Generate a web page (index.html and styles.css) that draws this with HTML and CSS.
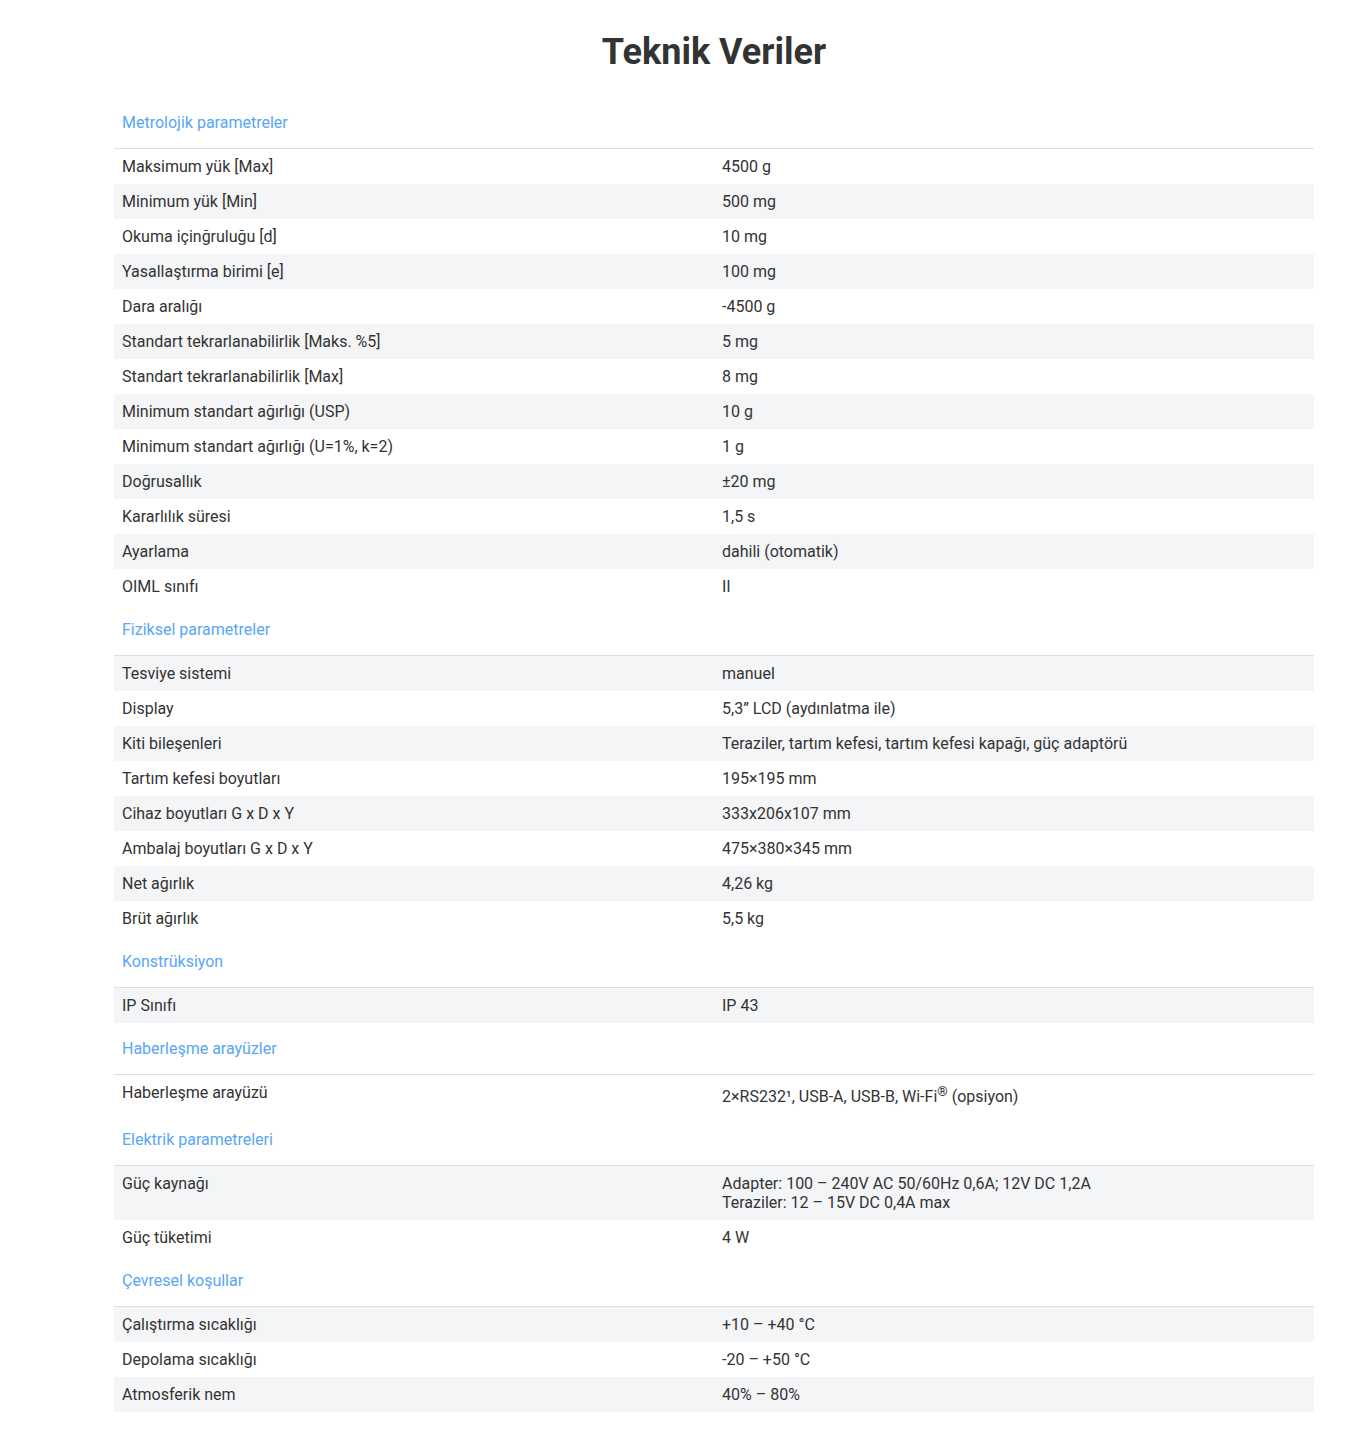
FILE: index.html
```html
<!DOCTYPE html>
<html lang="tr">
<head>
<meta charset="utf-8">
<title>Teknik Veriler</title>
<link rel="stylesheet" href="styles.css">
</head>
<body>
<div class="page">
  <h1 class="title">Teknik Veriler</h1>
  <table class="spec">
    <colgroup><col class="c1"><col class="c2"></colgroup>
    <tbody>
      <tr class="sec"><th colspan="2">Metrolojik parametreler</th></tr>
      <tr><td>Maksimum yük [Max]</td><td>4500 g</td></tr>
      <tr class="g"><td>Minimum yük [Min]</td><td>500 mg</td></tr>
      <tr><td>Okuma içinğruluğu [d]</td><td>10 mg</td></tr>
      <tr class="g"><td>Yasallaştırma birimi [e]</td><td>100 mg</td></tr>
      <tr><td>Dara aralığı</td><td>-4500 g</td></tr>
      <tr class="g"><td>Standart tekrarlanabilirlik [Maks. %5]</td><td>5 mg</td></tr>
      <tr><td>Standart tekrarlanabilirlik [Max]</td><td>8 mg</td></tr>
      <tr class="g"><td>Minimum standart ağırlığı (USP)</td><td>10 g</td></tr>
      <tr><td>Minimum standart ağırlığı (U=1%, k=2)</td><td>1 g</td></tr>
      <tr class="g"><td>Doğrusallık</td><td>±20 mg</td></tr>
      <tr><td>Kararlılık süresi</td><td>1,5 s</td></tr>
      <tr class="g"><td>Ayarlama</td><td>dahili (otomatik)</td></tr>
      <tr><td>OIML sınıfı</td><td>II</td></tr>

      <tr class="sec"><th colspan="2">Fiziksel parametreler</th></tr>
      <tr class="g"><td>Tesviye sistemi</td><td>manuel</td></tr>
      <tr><td>Display</td><td>5,3” LCD (aydınlatma ile)</td></tr>
      <tr class="g"><td>Kiti bileşenleri</td><td>Teraziler, tartım kefesi, tartım kefesi kapağı, güç adaptörü</td></tr>
      <tr><td>Tartım kefesi boyutları</td><td>195×195 mm</td></tr>
      <tr class="g"><td>Cihaz boyutları G x D x Y</td><td>333x206x107 mm</td></tr>
      <tr><td>Ambalaj boyutları G x D x Y</td><td>475×380×345 mm</td></tr>
      <tr class="g"><td>Net ağırlık</td><td>4,26 kg</td></tr>
      <tr><td>Brüt ağırlık</td><td>5,5 kg</td></tr>

      <tr class="sec"><th colspan="2">Konstrüksiyon</th></tr>
      <tr class="g"><td>IP Sınıfı</td><td>IP 43</td></tr>

      <tr class="sec"><th colspan="2">Haberleşme arayüzler</th></tr>
      <tr><td>Haberleşme arayüzü</td><td>2×RS232¹, USB-A, USB-B, Wi-Fi<sup>®</sup> (opsiyon)</td></tr>

      <tr class="sec"><th colspan="2">Elektrik parametreleri</th></tr>
      <tr class="g"><td>Güç kaynağı</td><td>Adapter: 100 – 240V AC 50/60Hz 0,6A; 12V DC 1,2A<br>Teraziler: 12 – 15V DC 0,4A max</td></tr>
      <tr><td>Güç tüketimi</td><td>4 W</td></tr>

      <tr class="sec"><th colspan="2">Çevresel koşullar</th></tr>
      <tr class="g"><td>Çalıştırma sıcaklığı</td><td>+10 – +40 °C</td></tr>
      <tr><td>Depolama sıcaklığı</td><td>-20 – +50 °C</td></tr>
      <tr class="g"><td>Atmosferik nem</td><td>40% – 80%</td></tr>
    </tbody>
  </table>
</div>
</body>
</html>
```
FILE: styles.css
```css
html, body {
  margin: 0;
  padding: 0;
  background: #ffffff;
}
body {
  font-family: Roboto, "Liberation Sans", Arial, sans-serif;
  color: #333333;
}
.page {
  width: 1200px;
  margin-left: 114px;
  padding-bottom: 17px;
}
.title {
  margin: 31px 0 24px;
  font-size: 36px;
  line-height: 42px;
  font-weight: 700;
  text-align: center;
  color: #333333;
}
.spec {
  width: 1200px;
  border-collapse: collapse;
  table-layout: fixed;
  font-size: 16px;
  line-height: 19px;
}
.spec .c1, .spec .c2 {
  width: 600px;
}
.spec td {
  padding: 8px 8px;
  vertical-align: top;
  color: #333333;
}
.spec tr.g td {
  background: #f4f5f7;
}
.spec tr.sec th {
  padding: 16px 8px 16px;
  text-align: left;
  font-weight: 400;
  color: #58a6f6;
  border-bottom: 1px solid #dddddd;
}
.spec sup {
  font-size: smaller;
  line-height: 17px;
  vertical-align: super;
}
```
